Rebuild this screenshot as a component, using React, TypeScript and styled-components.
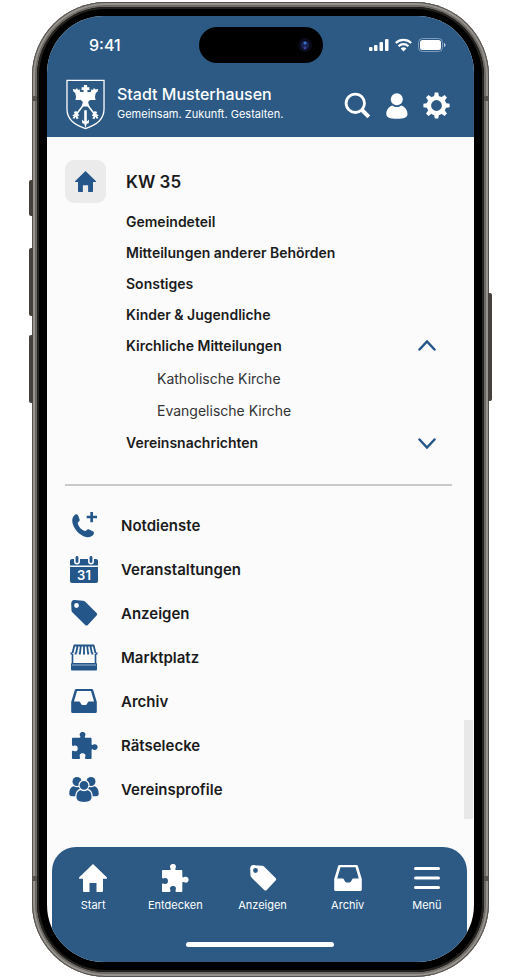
import React from "react";
import styled, { createGlobalStyle, css } from "styled-components";

const BLUE = "#2c5a85";
const ICON_BLUE = "#24568a";
const INK = "#1b1b1d";
const PAPER = "#fbfbfb";

const GlobalStyle = createGlobalStyle`
  *, *::before, *::after { box-sizing: border-box; }
  body { margin: 0; background: #fff; font-family: Inter, "Liberation Sans", sans-serif; color: ${INK}; }
  ul { margin: 0; padding: 0; list-style: none; }
  h1, h2, p { margin: 0; }
  a { color: inherit; text-decoration: none; }
  button { font: inherit; color: inherit; background: none; border: 0; padding: 0; cursor: pointer; }
  svg { display: block; flex: none; }
`;

/* ---------- device ---------- */

const Stage = styled.div`
  padding: 2px 30px 3px 32px;
`;

const Device = styled.div`
  position: relative;
  border-radius: 74px;
  padding: 5px;
  background: #6f6b66;
  box-shadow: inset 0 0 0 1px #55524e, inset 0 0 0 3px #96938e, inset 0 0 0 4px #6b6762;
`;

const SideButton = styled.span<{ $side: "left" | "right"; $top: number; $height: number }>`
  position: absolute;
  top: ${p => p.$top}px;
  height: ${p => p.$height}px;
  width: 4px;
  background: #46413d;
  ${p => (p.$side === "left"
    ? css`left: -3px; border-radius: 2px 0 0 2px;`
    : css`right: -3px; border-radius: 0 2px 2px 0;`)}
`;

const Antenna = styled.span<{ $side: "left" | "right"; $top: number }>`
  position: absolute;
  top: ${p => p.$top}px;
  ${p => p.$side}: 0;
  width: 5px;
  height: 5px;
  background: #56524e;
`;

const Bezel = styled.div`
  position: relative;
  padding: 9px 10px 10px;
  border-radius: 69px;
  background: #000;
  box-shadow: inset 0 0 0 2px #24221f;
`;

const Screen = styled.div`
  position: relative;
  overflow: hidden;
  border-radius: 57px;
  background: ${PAPER};
`;

/* ---------- header ---------- */

const Header = styled.header`
  background: ${BLUE};
  color: #fff;
`;

const StatusBar = styled.div`
  display: grid;
  grid-template-columns: 1fr auto 1fr;
  align-items: center;
  height: 58px;
  padding: 0 28px 0 42px;
`;

const Clock = styled.time`
  font-size: 16px;
  font-weight: 500;
`;

const Island = styled.div`
  display: flex;
  align-items: center;
  justify-content: flex-end;
  width: 124px;
  height: 36px;
  margin-right: 14px;
  padding-right: 10px;
  border-radius: 18px;
  background: #000;
`;

const Signals = styled.div`
  display: flex;
  align-items: center;
  justify-content: flex-end;
  gap: 6px;
`;

const Brand = styled.div`
  display: flex;
  align-items: center;
  height: 63px;
  padding: 0 24px 3px 19px;
`;

const BrandText = styled.div`
  flex: 1;
  margin-left: 12px;
  white-space: nowrap;
`;

const Title = styled.h1`
  font-size: 16px;
  line-height: 21px;
  font-weight: 500;
`;

const Claim = styled.p`
  font-size: 11px;
  line-height: 19px;
`;

const Actions = styled.div`
  display: flex;
  align-items: center;
  gap: 15px;
  padding-top: 3px;
`;

/* ---------- menu ---------- */

const Content = styled.main`
  padding: 23px 22px 36px 18px;
`;

const WeekRow = styled.div`
  display: flex;
  align-items: center;
  gap: 20px;
`;

const HomeLink = styled.a`
  display: grid;
  place-items: center;
  width: 41px;
  height: 43px;
  border-radius: 9px;
  background: #ebebec;
  color: ${ICON_BLUE};
`;

const Week = styled.h2`
  font-size: 17px;
  line-height: 24px;
  font-weight: 600;
`;

const Topics = styled.ul`
  margin: 3px 16px 0 61px;
`;

const rowText = css`
  display: flex;
  align-items: center;
  justify-content: space-between;
  width: 100%;
  height: 31px;
  font-size: 14px;
  font-weight: 600;
  text-align: left;
`;

const TopicLink = styled.a`${rowText}`;
const TopicToggle = styled.button`${rowText}`;

const SubTopics = styled.ul`
  padding: 1px 0 1px 31px;
`;

const SubLink = styled.a`
  display: flex;
  align-items: center;
  height: 32px;
  font-size: 14px;
  color: #333336;
`;

const Divider = styled.hr`
  height: 2px;
  margin: 26px 0 17px;
  border: 0;
  background: #c9c9cb;
`;

const ServiceLink = styled.a`
  display: grid;
  grid-template-columns: 38px 1fr;
  align-items: center;
  gap: 18px;
  height: 44px;
  font-size: 15px;
  font-weight: 600;

  svg { justify-self: center; color: ${ICON_BLUE}; }
`;

const ScrollThumb = styled.span`
  position: absolute;
  right: 1px;
  top: 704px;
  width: 9px;
  height: 99px;
  background: #e8e8e9;
`;

/* ---------- bottom navigation ---------- */

const BottomNav = styled.nav`
  margin: 0 7px 0 5px;
  padding: 17px 0 15px;
  border-radius: 24px 24px 0 0;
  background: ${BLUE};
  color: #fff;
`;

const Tabs = styled.ul`
  display: grid;
  grid-template-columns: 82fr 82fr 92fr 78fr 80fr;
`;

const TabLink = styled.a`
  display: flex;
  flex-direction: column;
  align-items: center;
  gap: 4px;
  font-size: 11px;
  line-height: 18px;
`;

const HomeIndicator = styled.div`
  width: 148px;
  height: 5px;
  margin: 28px auto 0;
  border-radius: 3px;
  background: #fff;
`;

/* ---------- icons ---------- */

const Crest = () => (
  <svg width="39" height="51" viewBox="0 0 120 156" fill="#fff" aria-hidden="true">
    <path d="M3 4H117V92c0 32-22 48-57 60C25 140 3 124 3 92Z" fill="none" stroke="#fff" strokeWidth="4" />
    <path d="M55 18h10v7h7v8h-6v7l11-1 1-8 5 2 3-6 5 5 8-2-2 9-5 3-3 11 2 11H74l-6 6 4 14H48l4-14-6-6H29l2-11-3-11-5-3-2-9 8 2 5-5 3 6 5-2 1 8 11 1v-7h-6v-8h7Z" />
    <path d="M52 82 32 108M68 82l20 26" stroke="#fff" strokeWidth="5" fill="none" />
    <path d="m49 124 7 6V96h8v34l7-6-1 12-6 1-4 13-4-13-6-1Z" />
    <path d="m32 98-8 3 3 6-8 4 5 3-4 6 7 1 2-5 4 7 6-3-4-6 6-2-5-6ZM88 98l8 3-3 6 8 4-5 3 4 6-7 1-2-5-4 7-6-3 4-6-6-2 5-6Z" />
  </svg>
);

const Lens = () => (
  <svg width="16" height="16" viewBox="0 0 16 16" aria-hidden="true">
    <circle cx="8" cy="8" r="7" fill="#0a0c1c" />
    <circle cx="8" cy="8" r="4" fill="#1a2450" />
    <circle cx="8" cy="6" r="1.5" fill="#3a72cc" />
    <circle cx="8" cy="11" r="1.5" fill="#403c9a" />
  </svg>
);

const Cellular = () => (
  <svg width="20" height="14" viewBox="0 0 20 14" fill="#fff" aria-hidden="true">
    <rect x="0" y="9" width="3.500" height="4" rx="1" />
    <rect x="5" y="7" width="3.500" height="6" rx="1" />
    <rect x="10.500" y="4" width="3.500" height="9" rx="1" />
    <rect x="16" y="1" width="3.500" height="12" rx="1" />
  </svg>
);

const Wifi = () => (
  <svg width="17" height="14" viewBox="0 0 17 14" fill="none" stroke="#fff" strokeWidth="2.2" aria-hidden="true">
    <path d="M.8 5a11 11 0 0 1 15.4 0M3.6 8.2a7 7 0 0 1 9.8 0" />
    <path d="M5.6 10.6a4.2 4.2 0 0 1 5.8 0L8.500 13.500Z" fill="#fff" stroke="none" />
  </svg>
);

const Battery = () => (
  <svg width="28" height="14" viewBox="0 0 28 14" aria-hidden="true">
    <rect x=".5" y=".5" width="24" height="13" rx="4" fill="none" stroke="#7f9dba" />
    <rect x="2" y="2" width="21" height="10" rx="2.500" fill="#fff" />
    <path d="M26 5c2 .5 2 3.500 0 4Z" fill="#b9cbdc" />
  </svg>
);

const SearchIcon = () => (
  <svg width="27" height="27" viewBox="0 0 27 27" fill="none" stroke="#fff" aria-hidden="true">
    <circle cx="11.300" cy="11.300" r="9.200" strokeWidth="2.800" />
    <path d="m18 18 6.800 6.800" strokeWidth="4" />
  </svg>
);

const UserIcon = () => (
  <svg width="22" height="26" viewBox="0 0 22 26" fill="#fff" aria-hidden="true">
    <circle cx="10.800" cy="6.200" r="6" />
    <path d="M6.500 12.500c2.500 2 6.100 2 8.600 0 4 1.300 6.400 4.500 6.400 8.700 0 3-3.500 4.600-10.600 4.600S.3 24.200.3 21.200c0-4.200 2.200-7.400 6.200-8.700Z" />
  </svg>
);

const GearIcon = () => (
  <svg width="27" height="27" viewBox="0 0 27 27" fill="none" stroke="#fff" aria-hidden="true">
    <circle cx="13.500" cy="13.500" r="7.600" strokeWidth="4.400" />
    {[0, 45, 90, 135, 180, 225, 270, 315].map(a => (
      <path key={a} d="m10.900 5 .9-4.600h3.400l.9 4.600Z" fill="#fff" stroke="none" transform={`rotate(${a} 13.5 13.5)`} />
    ))}
  </svg>
);

const HouseIcon = ({ size }: { size: number }) => (
  <svg width={size} height={size} viewBox="0 0 28 28" fill="currentColor" aria-hidden="true">
    <path d="M14 0 28.200 13.800l-.6 1H24V27a1 1 0 0 1-1 1h-5.500v-9h-7v9H5a1 1 0 0 1-1-1V14.800H.4l-.6-1Z" />
  </svg>
);

const Chevron = ({ up }: { up?: boolean }) => (
  <svg width="18" height="12" viewBox="0 0 18 12" fill="none" stroke={ICON_BLUE} strokeWidth="2.500" strokeLinecap="round" aria-hidden="true">
    <path d={up ? "m1.500 9.500 7.500-8 7.500 8" : "m1.500 2.500 7.500 8 7.500-8"} />
  </svg>
);

const PhonePlusIcon = () => (
  <svg width="26" height="28" viewBox="0 0 78 84" fill="currentColor" aria-hidden="true">
    <path d="M11 12c4-4 9-2 11 3l4 11c1 4-5 7-6 9 2 12 11 21 22 25 4 1 6-6 11-5l12 6c5 2 5 6 2 10-5 6-12 9-22 7C24 73 7 52 4 33 3 25 5 17 11 12Z" />
    <path d="M58 3h8v11h12v8H66v12h-8V22H47v-8h11Z" />
  </svg>
);

const CalendarText = styled.text`
  font: 600 13px Inter, "Liberation Sans", sans-serif;
`;

const CalendarIcon = () => (
  <svg width="30" height="29" viewBox="0 0 30 29" fill="currentColor" aria-hidden="true">
    <path d="M3 4h2v2.500a3 3 0 0 0 6 0V4h8v2.500a3 3 0 0 0 6 0V4h2a2 2 0 0 1 2 2v4.500H1V6a2 2 0 0 1 2-2Z" />
    <rect x="6.600" y="1" width="2.800" height="7" rx="1.400" />
    <rect x="20.600" y="1" width="2.800" height="7" rx="1.400" />
    <path d="M1 12h28v14a2 2 0 0 1-2 2H3a2 2 0 0 1-2-2Z" />
    <CalendarText x="15" y="25" textAnchor="middle" fill="#fff">31</CalendarText>
  </svg>
);

const TagIcon = () => (
  <svg width="28" height="28" viewBox="0 0 28 27" fill="currentColor" aria-hidden="true">
    <path fillRule="evenodd" d="M4.500.6 13 1.200a3 3 0 0 1 2 .9L26.600 13.500a1.800 1.800 0 0 1 0 2.500l-8.800 9.400a1.800 1.800 0 0 1-2.600 0L2.500 13a3 3 0 0 1-1-2L1.200 4.500C1.200 2 2.200.6 4.500.6Zm2 3a2.400 2.400 0 1 0 0 4.800 2.400 2.400 0 0 0 0-4.800Z" />
  </svg>
);

const MarketIcon = () => (
  <svg width="28" height="27" viewBox="0 0 28 27" fill="none" stroke="currentColor" aria-hidden="true">
    <path d="M4 1.500h20" strokeWidth="2" />
    <path d="M4.500 1 2.500 9M7.700 1 6.200 9M10.900 1l-.9 8M14 1v8M17.100 1l.9 8M20.300 1l1.500 8M23.500 1l2 8" strokeWidth="1.800" />
    <path d="M1.500 8.500v2M5.700 8.500v2M9.800 8.500v2M14 8.500v2M18.200 8.500v2M22.300 8.500v2M26.500 8.500v2" strokeWidth="2" />
    <path d="M2.500 10v9M25.500 10v9" strokeWidth="1.600" />
    <rect x="1" y="19" width="26" height="7.500" rx="1" fill="currentColor" stroke="none" />
    <path d="M2 21h24" stroke="#9fb6cc" strokeWidth="1" />
  </svg>
);

const TrayIcon = ({ size }: { size: number }) => (
  <svg width={size} height={size} viewBox="0 0 28 28" fill="currentColor" aria-hidden="true">
    <path fillRule="evenodd" d="M5.600 1h16.800a1.600 1.600 0 0 1 1.500 1.100L27.800 15v10.500a1.500 1.500 0 0 1-1.500 1.500H1.700a1.500 1.500 0 0 1-1.500-1.500V15L4.100 2.100A1.600 1.600 0 0 1 5.600 1Zm.9 2.200L3.200 14.500h5.600a1 1 0 0 1 .9.500l1.300 2.600a1.500 1.500 0 0 0 1.300.8h3.400a1.500 1.500 0 0 0 1.300-.8l1.300-2.600a1 1 0 0 1 .9-.5h5.600L21.500 3.200Z" />
  </svg>
);

const PuzzleIcon = ({ size }: { size: number }) => (
  <svg width={size} height={size} viewBox="0 0 84 84" fill="currentColor" aria-hidden="true">
    <path d="M7 18h19c4 0 4-3 2-6-3-6 1-12 8-12s11 6 8 12c-2 3-2 6 2 6h14c3 0 4 1 4 4v15c0 4 3 4 6 2 6-3 13 1 13 8s-7 11-13 8c-3-2-6-2-6 2v23c0 3-1 4-4 4H47c-4 0-4-3-3-6 3-7-1-12-8-12s-11 5-8 12c1 3 1 6-3 6H7c-3 0-4-1-4-4V62c0-4 3-4 6-3 7 3 12-1 12-8s-5-11-12-8c-3 1-6 1-6-3V22c0-3 1-4 4-4Z" />
  </svg>
);

const PeopleIcon = () => (
  <svg width="30" height="27" viewBox="0 0 30 27" fill="currentColor" aria-hidden="true">
    <circle cx="8" cy="5.500" r="4.500" />
    <circle cx="22" cy="5.500" r="4.500" />
    <path d="M.3 17.500C.3 13 2 11 4.800 10.300c2 1.300 4.400 1.300 6.400 0l4 3v7H3c-2 0-2.700-1-2.700-2.800ZM29.700 17.500c0-4.500-1.700-6.500-4.500-7.200-2 1.300-4.400 1.300-6.400 0l-4 3v7H27c2 0 2.700-1 2.700-2.800Z" />
    <path d="M11.500 13.300C8.200 14.200 6.800 16.800 6.800 21c0 4 2.300 5.500 8.200 5.500s8.200-1.500 8.200-5.500c0-4.200-1.400-6.800-4.700-7.700-2 1.500-5 1.500-7 0Z" stroke={PAPER} strokeWidth="1.200" />
    <circle cx="15" cy="9.300" r="5" stroke={PAPER} strokeWidth="1.200" />
  </svg>
);

const MenuIcon = () => (
  <svg width="28" height="28" viewBox="0 0 28 28" stroke="currentColor" strokeWidth="3" strokeLinecap="round" aria-hidden="true">
    <path d="M2.500 4.500h23M2.500 14h23M2.500 23.500h23" />
  </svg>
);

/* ---------- data ---------- */

const topics = ["Gemeindeteil", "Mitteilungen anderer Behörden", "Sonstiges", "Kinder & Jugendliche"];

const services = [
  { label: "Notdienste", icon: <PhonePlusIcon /> },
  { label: "Veranstaltungen", icon: <CalendarIcon /> },
  { label: "Anzeigen", icon: <TagIcon /> },
  { label: "Marktplatz", icon: <MarketIcon /> },
  { label: "Archiv", icon: <TrayIcon size={26} /> },
  { label: "Rätselecke", icon: <PuzzleIcon size={27} /> },
  { label: "Vereinsprofile", icon: <PeopleIcon /> },
];

const tabs = [
  { label: "Start", icon: <HouseIcon size={28} /> },
  { label: "Entdecken", icon: <PuzzleIcon size={28} /> },
  { label: "Anzeigen", icon: <TagIcon /> },
  { label: "Archiv", icon: <TrayIcon size={28} /> },
  { label: "Menü", icon: <MenuIcon /> },
];

export default function App() {
  const [churchOpen, setChurchOpen] = React.useState(true);
  const [clubsOpen, setClubsOpen] = React.useState(false);

  return (
    <>
      <GlobalStyle />
      <Stage>
        <Device>
          <SideButton $side="left" $top={178} $height={36} />
          <SideButton $side="left" $top={246} $height={68} />
          <SideButton $side="left" $top={333} $height={68} />
          <SideButton $side="right" $top={291} $height={108} />
          <Antenna $side="left" $top={94} />
          <Antenna $side="right" $top={94} />
          <Antenna $side="left" $top={874} />
          <Antenna $side="right" $top={874} />
          <Bezel>
            <Screen>
              <Header>
                <StatusBar>
                  <Clock>9:41</Clock>
                  <Island><Lens /></Island>
                  <Signals><Cellular /><Wifi /><Battery /></Signals>
                </StatusBar>
                <Brand>
                  <Crest />
                  <BrandText>
                    <Title>Stadt Musterhausen</Title>
                    <Claim>Gemeinsam. Zukunft. Gestalten.</Claim>
                  </BrandText>
                  <Actions>
                    <button type="button" aria-label="Suche"><SearchIcon /></button>
                    <button type="button" aria-label="Profil"><UserIcon /></button>
                    <button type="button" aria-label="Einstellungen"><GearIcon /></button>
                  </Actions>
                </Brand>
              </Header>

              <Content>
                <WeekRow>
                  <HomeLink href="#start" aria-label="Startseite"><HouseIcon size={21} /></HomeLink>
                  <Week>KW 35</Week>
                </WeekRow>
                <Topics>
                  {topics.map(t => (
                    <li key={t}><TopicLink href="#thema">{t}</TopicLink></li>
                  ))}
                  <li>
                    <TopicToggle type="button" aria-expanded={churchOpen} onClick={() => setChurchOpen(!churchOpen)}>
                      Kirchliche Mitteilungen
                      <Chevron up={churchOpen} />
                    </TopicToggle>
                    {churchOpen && (
                      <SubTopics>
                        <li><SubLink href="#katholisch">Katholische Kirche</SubLink></li>
                        <li><SubLink href="#evangelisch">Evangelische Kirche</SubLink></li>
                      </SubTopics>
                    )}
                  </li>
                  <li>
                    <TopicToggle type="button" aria-expanded={clubsOpen} onClick={() => setClubsOpen(!clubsOpen)}>
                      Vereinsnachrichten
                      <Chevron up={clubsOpen} />
                    </TopicToggle>
                  </li>
                </Topics>
                <Divider />
                <ul>
                  {services.map(s => (
                    <li key={s.label}><ServiceLink href="#dienst">{s.icon}{s.label}</ServiceLink></li>
                  ))}
                </ul>
              </Content>

              <ScrollThumb />

              <BottomNav aria-label="Hauptnavigation">
                <Tabs>
                  {tabs.map(t => (
                    <li key={t.label}><TabLink href="#tab">{t.icon}{t.label}</TabLink></li>
                  ))}
                </Tabs>
                <HomeIndicator />
              </BottomNav>
            </Screen>
          </Bezel>
        </Device>
      </Stage>
    </>
  );
}
